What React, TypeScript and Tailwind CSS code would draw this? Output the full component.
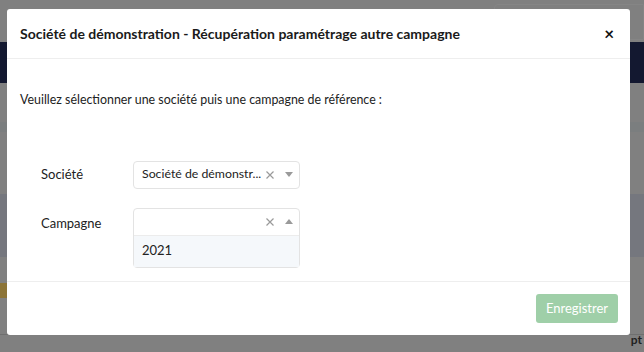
import React from "react";

function Caret({ up }: { up?: boolean }) {
  return (
    <svg width="8" height="5" viewBox="0 0 8 5" className="text-[#9a9a9a]">
      {up ? <path d="M0 5 L4 0 L8 5 Z" fill="currentColor" /> : <path d="M0 0 L4 5 L8 0 Z" fill="currentColor" />}
    </svg>
  );
}

function Clear() {
  return (
    <svg width="8" height="8" viewBox="0 0 8 8" className="text-[#9a9a9a]">
      <path d="M0.5 0.5 L7.5 7.5 M7.5 0.5 L0.5 7.5" stroke="currentColor" strokeWidth="1.2" />
    </svg>
  );
}

export default function App() {
  return (
    <div className="relative h-[352px] w-[644px] overflow-hidden bg-[#808080] font-['Lato','Noto_Sans',sans-serif]">
      {/* page behind the overlay */}
      <div className="flex h-full flex-col">
        <div className="flex h-[42px] justify-end pt-[4px]">
          <div className="h-[36px] w-[150px] rounded-l-sm border border-[#858585]" />
        </div>
        <div className="h-[41px] bg-[#131830]" />
        <div className="h-[39px]" />
        <div className="h-[10px] bg-[#7b7e7f]" />
        <div className="h-[62px]" />
        <div className="h-[63px] bg-[#75777e]" />
        <div className="h-[26px]" />
        <div className="flex h-[15px]">
          <div className="w-[40px] bg-[#8c7437]" />
        </div>
        <div className="h-[37px] border-b border-[#6f6f6f]" />
        <div className="flex h-[10px] items-start justify-end pr-[2px] text-[12px] font-bold leading-[10px] text-[#222]">pt</div>
      </div>

      {/* modal */}
      <div className="absolute left-[7px] top-[9px] flex h-[326px] w-[623px] flex-col rounded-[3px] bg-white text-[#222]">
        <div className="flex h-[50px] items-center justify-between border-b border-[#eeeeee] pl-[13px] pr-[16px]">
          <h4 className="text-[14px] font-bold text-[#1a1a1a]">Société de démonstration - Récupération paramétrage autre campagne</h4>
          <span className="text-[17px] font-bold leading-none text-[#111]">×</span>
        </div>
        <div className="flex flex-1 flex-col px-[13px] pt-[32px]">
          <p className="text-[12.4px]">Veuillez sélectionner une société puis une campagne de référence :</p>
          <div className="mt-[51px] flex items-center">
            <span className="w-[113px] pl-[21px] text-[13px]">Société</span>
            <div className="flex h-[28px] w-[167px] items-center rounded-[4px] border border-[#e3e3e3] pl-[8px] pr-[6px]">
              <span className="whitespace-nowrap text-[12.3px]">Société de démonstr...</span>
              <span className="ml-auto"><Clear /></span>
              <span className="ml-[11px]"><Caret /></span>
            </div>
          </div>
          <div className="mt-[19px] flex items-start">
            <span className="w-[113px] pl-[21px] pt-[6px] text-[13px]">Campagne</span>
            <div className="w-[167px] rounded-[4px] border border-[#e3e3e3]">
              <div className="flex h-[27px] items-center justify-end border-b border-[#ececec] pr-[6px]">
                <Clear />
                <span className="ml-[11px]"><Caret up /></span>
              </div>
              <div className="flex h-[31px] items-center bg-[#f5f8fb] pl-[8px] text-[13px]">2021</div>
            </div>
          </div>
        </div>
        <div className="flex h-[54px] items-center justify-end border-t border-[#eeeeee] pr-[12px]">
          <button className="h-[29px] w-[82px] rounded-[3px] bg-[#9fcfa8] text-[13px] text-white">Enregistrer</button>
        </div>
      </div>
    </div>
  );
}
